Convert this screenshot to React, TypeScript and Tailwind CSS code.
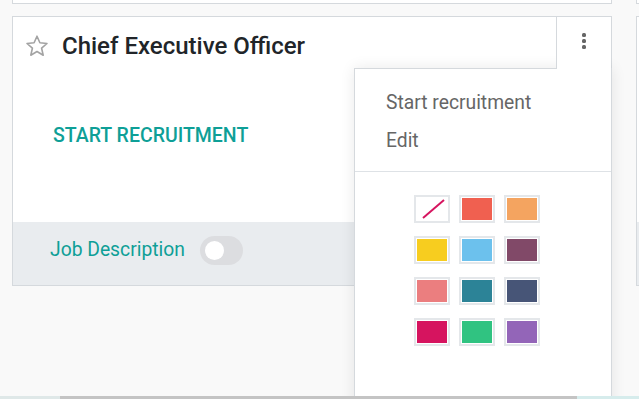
import React from "react";

const swatches = [
  "none",
  "#f06050",
  "#f4a460",
  "#f7cd1f",
  "#6cc1ed",
  "#814968",
  "#eb7e7f",
  "#2c8397",
  "#475577",
  "#d6145f",
  "#30c381",
  "#9365b8",
];

const StarIcon = () => (
  <svg width="24" height="24" viewBox="0 0 24 24" fill="none">
    <path
      d="M12 2.2l2.9 6.6 7.1.7-5.4 4.7 1.6 7-6.2-3.7-6.2 3.7 1.6-7L2 9.5l7.1-.7z"
      stroke="#a3a3a3"
      strokeWidth="1.6"
      strokeLinejoin="round"
    />
  </svg>
);

const KebabIcon = () => (
  <svg width="4" height="16" viewBox="0 0 4 16">
    <rect x="0" y="0" width="4" height="4" rx="1.5" fill="#666" />
    <rect x="0" y="6" width="4" height="4" rx="1.5" fill="#666" />
    <rect x="0" y="12" width="4" height="4" rx="1.5" fill="#666" />
  </svg>
);

const Swatch = ({ color }: { color: string }) => (
  <div className="w-[36px] h-[28px] border-2 border-[#e4e7ea] p-px bg-white">
    {color === "none" ? (
      <svg className="w-full h-full" viewBox="0 0 30 22">
        <line x1="6" y1="20" x2="27" y2="2" stroke="#d6145f" strokeWidth="2" />
      </svg>
    ) : (
      <div className="w-full h-full" style={{ background: color }} />
    )}
  </div>
);

const DropdownMenu = () => (
  <div className="absolute top-[51px] right-[-1px] w-[258px] h-[400px] bg-white border border-[#d5d9dd] shadow-[0_0_14px_rgba(0,0,0,0.09)] z-0">
    <div className="pt-[15px] px-[31px] text-[19.3px] text-[#666]">
      <div className="h-[38px] flex items-center">Start recruitment</div>
      <div className="h-[38px] flex items-center">Edit</div>
    </div>
    <div className="mt-[11px] border-t border-[#dee2e6]" />
    <div className="pt-[23px] pl-[59px] grid grid-cols-[repeat(3,36px)] gap-x-[9px] gap-y-[13px]">
      {swatches.map((c, i) => (
        <Swatch key={i} color={c} />
      ))}
    </div>
  </div>
);

const JobCard = () => (
  <div className="relative bg-white border border-[#d5d9dd]">
    <div className="flex items-stretch h-[52px]">
      <div className="flex-1 flex items-center pl-[12px] pt-[5px] gap-[13px]">
        <StarIcon />
        <span className="text-[24px] font-medium text-[#212529]">
          Chief Executive Officer
        </span>
      </div>
      <div className="relative z-10 w-[55px] h-[52px] bg-white border-l border-[#d5d9dd] flex items-center justify-center pb-[4px]">
        <KebabIcon />
      </div>
    </div>
    <div className="h-[153px] pl-[40px] pt-[52px]">
      <span className="text-[19.5px] font-medium text-[#0e9f97] uppercase">
        Start recruitment
      </span>
    </div>
    <div className="h-[63px] bg-[#e9ecef] flex items-center pl-[37px] pb-[6px] gap-[15px]">
      <span className="text-[19.3px] text-[#0e9f97]">Job Description</span>
      <div className="w-[43px] h-[29px] rounded-full bg-[#dcdde0] flex items-center pl-[5px]">
        <div className="w-[19px] h-[19px] rounded-full bg-white" />
      </div>
    </div>
    <DropdownMenu />
  </div>
);

export default function App() {
  return (
    <div
      className="w-[639px] h-[399px] bg-[#f9f9f9] flex flex-col overflow-hidden"
      style={{ fontFamily: "Roboto, 'Noto Sans', sans-serif" }}
    >
      <div className="h-[396px] overflow-hidden pl-[12px] flex gap-6">
        <div className="w-[600px] shrink-0">
          <div className="h-[4px] bg-white border-x border-b border-[#d5d9dd]" />
          <div className="mt-[12px]">
            <JobCard />
          </div>
        </div>
        <div className="w-[600px] shrink-0">
          <div className="h-[4px] bg-white border-x border-b border-[#d5d9dd]" />
          <div className="mt-[12px] bg-white border border-[#d5d9dd]">
            <div className="h-[205px]" />
            <div className="h-[63px] bg-[#e9ecef]" />
          </div>
        </div>
      </div>
      <div className="h-[3px] flex">
        <div className="w-[60px] bg-[#dfe8e8]" />
        <div className="w-[517px] bg-[#c4c4c4]" />
        <div className="flex-1 bg-[#d6ecec]" />
      </div>
    </div>
  );
}
